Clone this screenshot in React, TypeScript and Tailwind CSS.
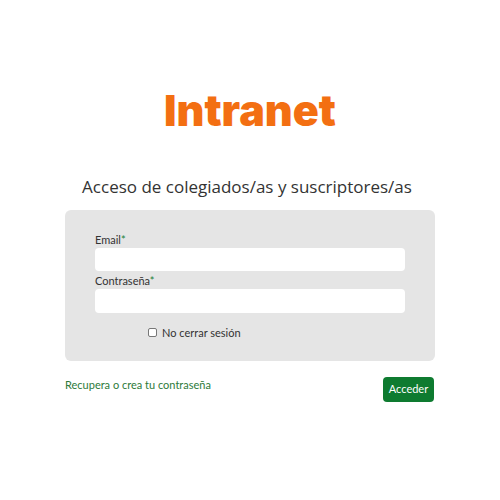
export default function App() {
  return (
    <div className="w-[500px] h-[500px] bg-white font-['Open_Sans',sans-serif]">
      <div className="w-[370px] mx-auto pt-[86px]">
        <h1 className="text-center text-[43px] leading-[48px] font-black text-[#f36f12] font-['Inter',sans-serif]">
          Intranet
        </h1>
        <h2 className="mt-[41px] text-center text-[17px] leading-[24px] text-[#333] pr-[6px]">
          Acceso de colegiados/as y suscriptores/as
        </h2>
        <form className="mt-[11px] bg-[#e5e5e5] rounded-md pt-[22px] pb-[21px] px-[30px] font-['Lato',sans-serif]">
          <label className="block text-[11px] leading-[15px] text-[#333]">
            Email<span className="text-[#1a7f37]">*</span>
          </label>
          <input className="block w-full h-[23px] mt-[1px] bg-white rounded-[4px] outline-none" />
          <label className="block mt-[2px] text-[11px] leading-[15px] text-[#333]">
            Contraseña<span className="text-[#1a7f37]">*</span>
          </label>
          <input type="password" className="block w-full h-[24px] mt-[1px] bg-white rounded-[4px] outline-none" />
          <label className="flex items-center gap-[5px] mt-[12px] ml-[53px] text-[11px] leading-[15px] text-[#333]">
            <span className="w-[9px] h-[9px] border border-[#777] rounded-[2px] bg-white" />
            No cerrar sesión
          </label>
        </form>
        <div className="flex items-start justify-between mt-[16px] font-['Lato',sans-serif]">
          <a className="text-[11px] leading-[15px] text-[#2d7a3a] cursor-pointer">Recupera o crea tu contraseña</a>
          <button className="w-[51px] h-[25px] bg-[#0e7b30] text-white text-[11px] rounded-[4px] mr-[1px]">
            Acceder
          </button>
        </div>
      </div>
    </div>
  );
}
